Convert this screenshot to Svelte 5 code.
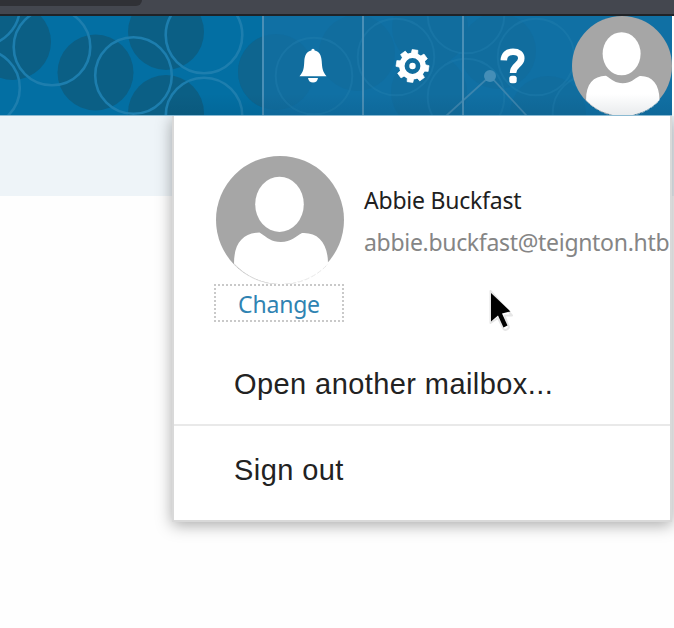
<script>
  const discs = [[13, 26], [95.5, 56.5], [166, 16], [166, 97], [276, 56]];
  const rings = [[-18.5, -9], [-18.5, 72], [52, 31], [133.5, 59.5], [204, 19], [204, 100]];
  const faintDiscs = [[357, 37], [429, 76], [430, 12], [498, 35], [548, 98]];
  const faintRings = [[314, 60], [396, 41], [466, -1], [466, 81], [536, 41], [591, 97]];
</script>

{#snippet avatar(size)}
  <svg class="avatar" width={size} height={size} viewBox="0 0 128 128">
    <circle cx="64" cy="64" r="64" fill="#a6a6a6" />
    <ellipse cx="63.5" cy="48.3" rx="24.3" ry="27.6" fill="#fff" />
    <path d="M18 107.5C18 87 27 77 43.500 76.500C52 82 55 86 65 86C75 86 80 80 86 77C102 76 112 87 112 107.500A64 64 0 0 1 18 107.500Z" fill="#fff" />
    <path d="M18 108A64 64 0 0 0 112 108" fill="none" stroke="#e2e2e2" stroke-width=".8" stroke-dasharray="5 2" />
  </svg>
{/snippet}

<div class="page">
  <div class="browser"><div class="tab"></div></div>
  <header>
    <svg class="pattern" width="672" height="100" viewBox="0 0 672 100">
      <g fill="#0b5f85">
        {#each discs as [x, y]}<circle cx={x} cy={y} r="38" />{/each}
      </g>
      <g fill="none" stroke="#1d7eae" stroke-width="2.6">
        {#each rings as [x, y]}<circle cx={x} cy={y} r="38.3" />{/each}
      </g>
      <rect x="263" width="409" height="100" fill="#1070a4" />
      <g fill="#126b9a" opacity=".5">
        <circle cx="276" cy="56" r="38" />
        {#each faintDiscs as [x, y]}<circle cx={x} cy={y} r="38" />{/each}
      </g>
      <g fill="none" stroke="#2380b0" stroke-width="2" opacity=".4">
        {#each faintRings as [x, y]}<circle cx={x} cy={y} r="38.3" />{/each}
      </g>
      <path d="M446 100L490 60L527 100" fill="none" stroke="#3c85ae" stroke-width="1.8" />
      <circle cx="490" cy="60" r="6" fill="#458eb7" />
    </svg>
    <nav>
      <button aria-label="Notifications">
        <svg width="28" height="36" viewBox="0 0 28 36">
          <path d="M14 .7C15.200 .7 15.500 1.500 15.600 2.500C20.500 3.500 22.300 7.500 22.700 13C23.200 20 23.500 23.500 27.500 28.300H.5C4.700 23.500 4.900 20 5.300 13C5.700 7.500 7.500 3.500 12.400 2.500C12.500 1.500 12.800 .7 14 .7Z" />
          <path d="M9 30H19C18.500 33 16.800 34.500 14 34.500S9.500 33 9 30Z" />
        </svg>
      </button>
      <button aria-label="Settings">
        <svg width="36" height="36" viewBox="-17.500 -18 36 36">
          <g transform="rotate(9)">
            {#each Array(8) as _, i}
              <path d="M-3.500 -10L-2.900 -16.300H2.900L3.500 -10Z" transform="rotate({i * 45})" stroke="#fff" stroke-linejoin="round" stroke-width=".6" />
            {/each}
          </g>
          <circle r="10.600" fill="none" stroke="#fff" stroke-width="5.400" />
          <circle r="3.200" />
        </svg>
      </button>
      <button aria-label="Help">
        <svg width="26" height="36" viewBox="0 0 26 36">
          <path d="M3.800 12.300C4 7 7 3.800 13 3.800C18.500 3.800 21.300 6.300 21.300 10.300C21.300 17 13 17 13 25" fill="none" stroke="#fff" stroke-width="6.500" />
          <rect x="9.300" y="27.800" width="7.400" height="7.400" rx="2.500" />
        </svg>
      </button>
      <div class="me">{@render avatar(100)}</div>
    </nav>
  </header>
  <main>
    <div class="band"></div>
    <section class="menu">
      <div class="profile">
        <div class="photo">
          {@render avatar(128)}
          <a href="#change">Change</a>
        </div>
        <div class="info">
          <div class="name">Abbie Buckfast</div>
          <div class="mail">abbie.buckfast@teignton.htb</div>
        </div>
      </div>
      <div class="item open">Open another mailbox...</div>
      <div class="item out">Sign out</div>
    </section>
  </main>
  <svg class="cursor" width="32" height="46" viewBox="0 0 32 46">
    <path d="M4.500 2V34L12 29L17.500 40C19 42 24 40 22.500 37L18.500 26.500H26Z" fill="#fff" stroke="#e6e6e6" stroke-width="2" stroke-linejoin="round" />
    <path d="M5 4V32.500L12 26.500L17.500 38.500L21.500 36.500L16 24.500L24.500 22.500Z" fill="#000" />
  </svg>
</div>

<style>
  :global(body) { margin: 0; }
  .page { position: relative; width: 674px; height: 628px; overflow: hidden; background: #fefefe; }
  .browser { height: 16px; box-sizing: border-box; background: #44474f; border-bottom: 2px solid #202327; }
  .tab { width: 142px; height: 6px; background: #303136; border-radius: 0 0 6px 0; }
  header { position: relative; width: 672px; height: 100px; background: #036fa3; z-index: 1; }
  header::after { content: ""; position: absolute; inset: 0 0 0 168px; background: linear-gradient(transparent 78%, rgba(0, 30, 50, .09)); pointer-events: none; }
  header::before { content: ""; position: absolute; z-index: 1; left: 0; right: 0; bottom: 0; height: 1px; background: #8bbad2; }
  .pattern { position: absolute; left: 0; top: 0; }
  nav { position: relative; display: flex; height: 100px; padding-left: 262px; }
  button { box-sizing: border-box; width: 100px; height: 100px; border: 0; border-left: 2px solid #4a8fb6; padding: 0; background: none; display: flex; align-items: center; justify-content: center; fill: #fff; }
  .me { margin-left: 10px; width: 100px; height: 100px; }
  .avatar { display: block; }
  main { position: relative; height: 512px; display: flex; }
  .band { position: absolute; left: 0; top: 0; width: 674px; height: 80px; background: #eef4f8; }
  .menu { position: relative; box-sizing: border-box; margin-left: 172px; width: 500px; height: 406px; flex: none; border: 2px solid #d9d9d9; border-top: 0; background: #fff; box-shadow: 0 3px 15px rgba(0, 0, 0, .34); }
  .profile { display: flex; height: 228px; box-sizing: border-box; padding: 40px 0 0 40px; }
  .photo { width: 130px; display: flex; flex-direction: column; align-items: center; padding-right: 1px; }
  .photo .avatar { margin-left: 2px; }
  a { box-sizing: border-box; width: 130px; height: 38px; border: 2px dotted #c9c9c9; color: #2f83b2; text-decoration: none; text-align: center; font: 23px/36px "Noto Sans", sans-serif; letter-spacing: -.2px; }
  .info { padding: 23px 0 0 19px; font: 23px/42px "Noto Sans", sans-serif; white-space: nowrap; }
  .name { color: #202020; letter-spacing: -.23px; }
  .mail { color: #858585; letter-spacing: -.31px; }
  .item { box-sizing: border-box; padding-left: 60px; font: 29px/34px "Liberation Sans", sans-serif; letter-spacing: .42px; color: #222; }
  .open { height: 82px; padding-top: 23px; border-bottom: 2px solid #e9e9e9; }
  .out { padding-top: 27px; }
  .cursor { position: absolute; left: 486px; top: 289px; z-index: 2; }
</style>
